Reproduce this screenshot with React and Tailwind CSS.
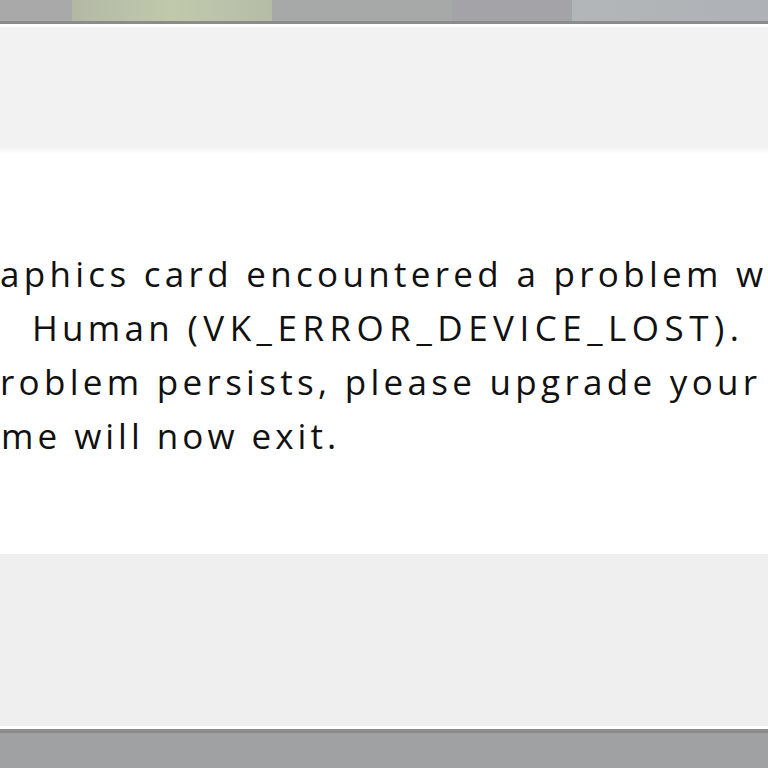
export default function App() {
  return (
    <div className="w-[768px] h-[768px] overflow-hidden flex flex-col bg-white font-['Open_Sans',sans-serif]">
      {/* background behind the dialog */}
      <div className="h-[21px] flex bg-[#a9a9aa]">
        <div className="w-[72px]" />
        <div className="w-[200px] bg-gradient-to-r from-[#b3b8a6] via-[#c0c9aa] to-[#b6bca8]" />
        <div className="w-[180px] bg-[#a7a8a8]" />
        <div className="w-[120px] bg-[#a4a3a8]" />
        <div className="flex-1 bg-gradient-to-r from-[#b3b6b8] to-[#aeb2b6]" />
      </div>
      <div className="h-[3px] bg-[#8b8b8b]" />
      <div className="h-[3px] bg-white" />

      {/* dialog header area */}
      <div className="h-[121px] bg-[#f2f2f2]" />
      <div className="h-[6px] bg-gradient-to-b from-[#f4f4f4] to-white" />

      {/* message */}
      <div className="h-[400px] bg-white pt-[93px] text-[35px] leading-[54px] text-[#111] tracking-[4.3px]">
        <div className="whitespace-nowrap">aphics card encountered a problem w</div>
        <div className="whitespace-nowrap ml-[32px]">
          Human <span className="tracking-[5.5px]">(VK_ERROR_DEVICE_LOST).</span>
        </div>
        <div className="whitespace-nowrap">roblem persists, please upgrade your</div>
        <div className="whitespace-nowrap ml-[1px] tracking-[4px]">me will now exit.</div>
      </div>

      {/* button strip */}
      <div className="h-[172px] bg-[#efefef]" />
      <div className="h-[3px] bg-white" />
      <div className="h-[4px] bg-[#8c8c8c]" />
      <div className="flex-1 bg-[#a0a1a2]" />
    </div>
  )
}
